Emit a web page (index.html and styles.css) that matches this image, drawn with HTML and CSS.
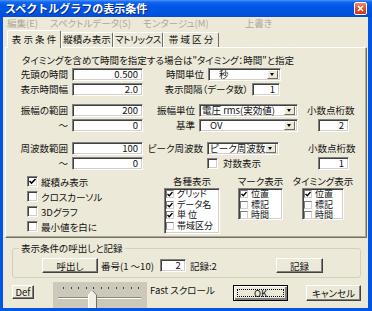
FILE: index.html
```html
<!DOCTYPE html>
<html lang="ja">
<head>
    <meta charset="UTF-8">
    <title>スペクトルグラフの表示条件</title>
    <link rel="stylesheet" href="styles.css">
</head>
<body>
<div class="window">
    <div class="titlebar">
        <span class="title">スペクトルグラフの表示条件</span>
        <span class="close-btn">
            <svg width="11" height="11" viewBox="0 0 11 11"><path d="M3 3 L8 8 M8 3 L3 8" stroke="#fff" stroke-width="1.6"/></svg>
        </span>
    </div>
    <div class="frame">
        <div class="client">
            <div class="menubar">
                <span class="menu">編集(E)</span>
                <span class="menu m-data">スペクトルデータ(S)</span>
                <span class="menu m-mont">モンタージュ(M)</span>
                <span class="menu m-over">上書き</span>
            </div>

            <div class="tabs">
                <div class="tab active">表 示 条 件</div>
                <div class="tab t2">縦積み表示</div>
                <div class="tab t3">マトリックス</div>
                <div class="tab t4">帯 域 区 分</div>
            </div>

            <div class="panel">
                <div class="note">タイミングを含めて時間を指定する場合は"タイミング：時間"と指定</div>

                <div class="row">
                    <span class="lbl">先頭の時間</span>
                    <span class="field main">0.500</span>
                    <span class="rlbl" style="width:61px">時間単位</span>
                    <span class="select s-unit"><span class="val indent">秒</span><span class="drop"></span></span>
                </div>
                <div class="row">
                    <span class="lbl">表示時間幅</span>
                    <span class="field main">2.0</span>
                    <span class="rlbl" style="width:105px">表示間隔（データ数）</span>
                    <span class="field small">1</span>
                </div>

                <div class="row gap-a">
                    <span class="lbl">振幅の範囲</span>
                    <span class="field main">200</span>
                    <span class="rlbl" style="width:52px">振幅単位</span>
                    <span class="select s-wide"><span class="val">電圧 rms(実効値)</span><span class="drop"></span></span>
                    <span class="digits">小数点桁数</span>
                </div>
                <div class="row">
                    <span class="lbl">～</span>
                    <span class="field main">0</span>
                    <span class="rlbl" style="width:52px">基準</span>
                    <span class="select s-wide"><span class="val indent">OV</span><span class="drop"></span></span>
                    <span class="field dig">2</span>
                </div>

                <div class="row gap-b">
                    <span class="lbl">周波数範囲</span>
                    <span class="field main">100</span>
                    <span class="rlbl" style="width:60px">ピーク周波数</span>
                    <span class="select s-peak"><span class="val">ピーク周波数</span><span class="drop"></span></span>
                    <span class="digits d2">小数点桁数</span>
                </div>
                <div class="row">
                    <span class="lbl">～</span>
                    <span class="field main">0</span>
                    <span class="logcheck"><span class="cb"></span>対数表示</span>
                    <span class="field dig">1</span>
                </div>

                <div class="bottom">
                    <div class="checks">
                        <div class="check"><span class="cb on"><svg width="9" height="9" viewBox="0 0 9 9"><path d="M1.5 4 L3.5 6 L7.5 2" fill="none" stroke="#000" stroke-width="1.6"/></svg></span>縦積み表示</div>
                        <div class="check"><span class="cb"></span>クロスカーソル</div>
                        <div class="check"><span class="cb"></span>3Dグラフ</div>
                        <div class="check"><span class="cb"></span>最小値を白に</div>
                    </div>

                    <div class="lgroup g1">
                        <div class="lhead">各種表示</div>
                        <div class="list tall">
                            <div class="item"><span class="mini on"><svg width="6" height="6" viewBox="0 0 6 6"><path d="M0.5 3 L2.3 4.8 L5.5 1" fill="none" stroke="#000" stroke-width="1.4"/></svg></span>グリッド</div>
                            <div class="item"><span class="mini on"><svg width="6" height="6" viewBox="0 0 6 6"><path d="M0.5 3 L2.3 4.8 L5.5 1" fill="none" stroke="#000" stroke-width="1.4"/></svg></span>データ名</div>
                            <div class="item"><span class="mini on"><svg width="6" height="6" viewBox="0 0 6 6"><path d="M0.5 3 L2.3 4.8 L5.5 1" fill="none" stroke="#000" stroke-width="1.4"/></svg></span>単 位</div>
                            <div class="item"><span class="mini"></span>帯域区分</div>
                        </div>
                    </div>
                    <div class="lgroup g2">
                        <div class="lhead">マーク表示</div>
                        <div class="list">
                            <div class="item"><span class="mini on"><svg width="6" height="6" viewBox="0 0 6 6"><path d="M0.5 3 L2.3 4.8 L5.5 1" fill="none" stroke="#000" stroke-width="1.4"/></svg></span>位置</div>
                            <div class="item"><span class="mini"></span>標記</div>
                            <div class="item"><span class="mini"></span>時間</div>
                        </div>
                    </div>
                    <div class="lgroup g3">
                        <div class="lhead">タイミング表示</div>
                        <div class="list">
                            <div class="item"><span class="mini on"><svg width="6" height="6" viewBox="0 0 6 6"><path d="M0.5 3 L2.3 4.8 L5.5 1" fill="none" stroke="#000" stroke-width="1.4"/></svg></span>位置</div>
                            <div class="item"><span class="mini"></span>標記</div>
                            <div class="item"><span class="mini"></span>時間</div>
                        </div>
                    </div>
                </div>
            </div>

            <fieldset class="group">
                <legend>表示条件の呼出しと記録</legend>
                <div class="grp-row">
                    <span class="btn b-load">呼出し</span>
                    <span class="num-lbl">番号(1 ～10)</span>
                    <span class="field num">2</span>
                    <span class="rec-lbl">記録:2</span>
                    <span class="btn b-rec">記録</span>
                </div>
            </fieldset>

            <div class="footer">
                <span class="btn b-def">Def</span>
                <span class="slider">
                    <svg width="94" height="26" viewBox="0 0 94 26">
                        <rect width="94" height="26" fill="#cdc9ba"/>
                        <g stroke="#404040" stroke-width="1">
                            <path d="M10.5 5 V7 M18.5 5 V7 M25.5 5 V7 M33.5 5 V7 M40.5 5 V7 M48.5 5 V7 M55.5 5 V7 M63.5 5 V7 M70.5 5 V7 M78.5 5 V7 M85.5 5 V7"/>
                        </g>
                        <path d="M5 15.5 H88" stroke="#8a8676"/>
                        <path d="M5 16.5 H88" stroke="#fff"/>
                        <polygon points="35.5,13 39.5,8.5 43.5,13 43.5,26 35.5,26" fill="#f1efe4" stroke="#fff"/>
                        <path d="M43.5 13 V26 M39.5 8.5 L43.5 13" stroke="#716f64" fill="none"/>
                    </svg>
                </span>
                <span class="fast">Fast スクロール</span>
                <span class="btn b-ok">OK</span>
                <span class="btn b-cancel">キャンセル</span>
            </div>
        </div>
    </div>
</div>
</body>
</html>
```

FILE: styles.css
```css
* {
    box-sizing: border-box;
}

html, body {
    margin: 0;
    padding: 0;
}

body {
    width: 372px;
    height: 311px;
    overflow: hidden;
    font-family: "Noto Sans CJK JP", "Noto Sans", sans-serif;
    font-size: 9.5px;
    font-feature-settings: "palt";
    color: #111;
}

.window {
    width: 372px;
    height: 311px;
    display: flex;
    flex-direction: column;
    background-color: #0055e5;
}

/* title bar */

.titlebar {
    height: 17px;
    display: flex;
    align-items: center;
    padding: 0 5px 0 5px;
    background: linear-gradient(#4b95fa 0, #1467ee 2px, #0058e6 6px, #0054e3 12px, #004cd8 17px);
}

.title {
    flex: 1;
    color: #fff;
    font-weight: bold;
    font-size: 11px;
    line-height: 17px;
    font-feature-settings: normal;
    text-shadow: 1px 1px #0a2a8a;
}

.close-btn {
    width: 13px;
    height: 13px;
    display: flex;
    align-items: center;
    justify-content: center;
    border: 1px solid #fff;
    border-radius: 2px;
    background: linear-gradient(#f08a6a, #e0502f 50%, #c83a18);
}

.frame {
    flex: 1;
    padding: 0 4px 3px 3px;
}

.client {
    height: 291px;
    background-color: #ece9d8;
}

/* menu */

.menubar {
    height: 13px;
    display: flex;
    align-items: center;
    padding-left: 4px;
    color: #aca899;
    line-height: 13px;
}

.m-data {
    margin-left: 12px;
}

.m-mont {
    margin-left: 12px;
}

.m-over {
    margin-left: 36px;
}

/* tabs */

.tabs {
    height: 17px;
    display: flex;
    align-items: flex-end;
    padding-left: 4px;
}

.tab {
    height: 15px;
    line-height: 13px;
    text-align: center;
    white-space: nowrap;
    border-top: 1px solid #fff;
    border-left: 1px solid #fff;
    border-right: 1px solid #716f64;
    border-radius: 2px 2px 0 0;
    background-color: #ece9d8;
}

.tab.active {
    position: relative;
    z-index: 1;
    width: 54px;
    height: 18px;
    line-height: 16px;
    margin-bottom: -1px;
}

.t2 {
    width: 52px;
}

.t3 {
    width: 50px;
    letter-spacing: -0.3px;
}

.t4 {
    width: 56px;
}

/* panel */

.panel {
    height: 191px;
    margin: 0 1px 0 2px;
    padding-top: 6px;
    border: 1px solid;
    border-color: #fff #716f64 #716f64 #fff;
    box-shadow: inset -1px -1px #aca899;
}

.note {
    height: 12px;
    line-height: 12px;
    padding-left: 16px;
    white-space: nowrap;
}

.row {
    display: flex;
    align-items: center;
    height: 14px;
    margin-top: 1px;
    padding-left: 10px;
    white-space: nowrap;
}

.row.gap-a {
    margin-top: 7px;
}

.row.gap-b {
    margin-top: 9px;
}

.lbl {
    width: 52px;
    margin-right: 4px;
    text-align: right;
}

.rlbl {
    margin-right: 4px;
    text-align: right;
}

.field {
    height: 13px;
    line-height: 11px;
    padding-right: 4px;
    text-align: right;
    background-color: #fff;
    border: 1px solid;
    border-color: #808080 #fff #fff #808080;
    box-shadow: inset 1px 1px #404040, inset -1px -1px #d4d0c8;
}

.field.main {
    width: 71px;
}

.field.small {
    width: 28px;
}

.field.dig {
    width: 31px;
    margin-left: auto;
    margin-right: 17px;
}

.select {
    height: 13px;
    display: flex;
    align-items: center;
    background-color: #fff;
    border: 1px solid;
    border-color: #808080 #fff #fff #808080;
    box-shadow: inset 1px 1px #404040, inset -1px -1px #d4d0c8;
}

.s-unit {
    width: 73px;
}

.s-wide {
    width: 99px;
}

.s-peak {
    width: 72px;
}

.val {
    flex: 1;
    padding-left: 2px;
    line-height: 11px;
    white-space: nowrap;
}

.val.indent {
    padding-left: 10px;
}

.drop {
    flex: none;
    width: 11px;
    height: 9px;
    margin-right: 2px;
    position: relative;
    background-color: #ece9d8;
    border: 1px solid;
    border-color: #fff #716f64 #716f64 #fff;
}

.drop::after {
    content: "";
    position: absolute;
    left: 2px;
    top: 2px;
    border-left: 2.5px solid transparent;
    border-right: 2.5px solid transparent;
    border-top: 3px solid #000;
}

.digits {
    margin-left: 9px;
}

.digits.d2 {
    margin-left: 29px;
}

.logcheck {
    display: flex;
    align-items: center;
    margin-left: 64px;
}

.logcheck .cb {
    margin-right: 5px;
}

/* checkboxes and lists */

.cb {
    width: 11px;
    height: 11px;
    display: flex;
    align-items: center;
    justify-content: center;
    background-color: #fff;
    border: 1px solid;
    border-color: #808080 #fff #fff #808080;
    box-shadow: inset 1px 1px #404040, inset -1px -1px #d4d0c8;
}

.bottom {
    display: flex;
    margin-top: 4px;
    height: 60px;
}

.checks {
    width: 158px;
    padding-left: 21px;
}

.check {
    height: 15px;
    display: flex;
    align-items: center;
}

.check .cb {
    margin-right: 3px;
}

.lgroup {
    display: flex;
    flex-direction: column;
    align-items: center;
}

.g1 {
    width: 56px;
}

.g2 {
    width: 45px;
    margin-left: 18px;
}

.g3 {
    width: 42px;
    margin-left: 19px;
}

.lhead {
    height: 14px;
    line-height: 14px;
    white-space: nowrap;
}

.list {
    width: 100%;
    height: 32px;
    padding: 0 0 0 1px;
    background-color: #fff;
    border: 1px solid;
    border-color: #808080 #fff #fff #808080;
    box-shadow: inset 1px 1px #404040, inset -1px -1px #d4d0c8;
    font-size: 9px;
}

.list.tall {
    height: 46px;
}

.item {
    height: 10.5px;
    display: flex;
    align-items: center;
    line-height: 10px;
    white-space: nowrap;
}

.mini {
    flex: none;
    width: 8px;
    height: 8px;
    margin-right: 3px;
    display: flex;
    align-items: center;
    justify-content: center;
    border: 1px solid;
    border-color: #808080 #d4d0c8 #d4d0c8 #808080;
}

/* group box */

.group {
    margin: 4px 7px 0 9px;
    padding: 0;
    min-width: 0;
    border: 1px solid #d0d0bf;
    border-radius: 3px;
}

.group legend {
    margin-left: 6px;
    padding: 0 2px;
    line-height: 12px;
}

.grp-row {
    height: 15px;
    display: flex;
    align-items: center;
    margin: 4px 0 4px 29px;
    padding-right: 37px;
}

.btn {
    height: 15px;
    display: flex;
    align-items: center;
    justify-content: center;
    background-color: #ece9d8;
    border: 1px solid;
    border-color: #fff #404040 #404040 #fff;
    box-shadow: inset -1px -1px #808080;
    white-space: nowrap;
}

.b-load {
    width: 56px;
}

.num-lbl {
    margin-left: 3px;
}

.field.num {
    width: 26px;
    margin-left: 6px;
}

.rec-lbl {
    margin-left: 4px;
}

.b-rec {
    width: 47px;
    margin-left: auto;
}

/* footer */

.footer {
    height: 26px;
    display: flex;
    align-items: flex-start;
    margin-top: 4px;
    padding: 0 7px 0 9px;
}

.b-def {
    width: 22px;
    height: 14px;
    margin-top: 3px;
}

.slider {
    width: 94px;
    height: 26px;
    margin-left: 19px;
    display: block;
}

.slider svg {
    display: block;
}

.fast {
    margin-left: 3px;
    line-height: 16px;
}

.b-ok {
    width: 55px;
    height: 16px;
    margin-top: 3px;
    margin-left: auto;
    border-color: #000;
    box-shadow: inset 1px 1px #fff, inset -2px -2px #808080;
    outline: 1px dotted #000;
    outline-offset: -5px;
}

.b-cancel {
    width: 55px;
    height: 16px;
    margin-top: 3px;
    margin-left: 18px;
}
```
